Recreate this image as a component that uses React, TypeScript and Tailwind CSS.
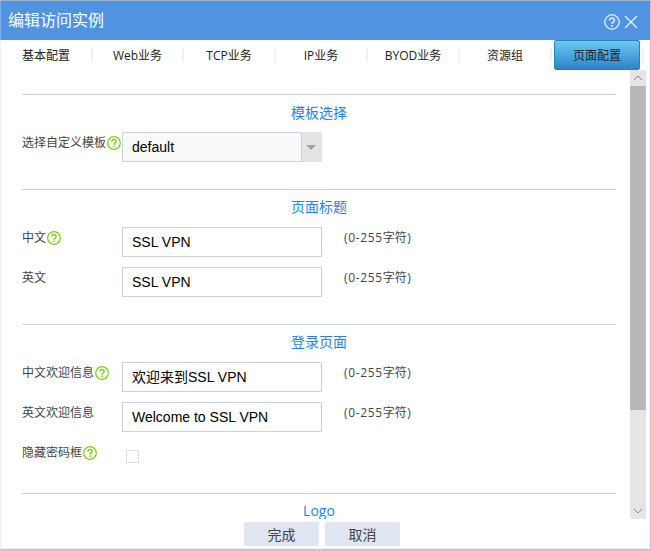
import type { ReactNode } from 'react';

const tabs = [
  { label: 'Web业务', width: 'w-[91px]' },
  { label: 'TCP业务', width: 'w-[92px]' },
  { label: 'IP业务', width: 'w-[92px]' },
  { label: 'BYOD业务', width: 'w-[92px]' },
  { label: '资源组', width: 'w-[92px]' },
];

function Help({ className, size = 14 }: { className: string; size?: number }) {
  return (
    <svg width={size} height={size} viewBox="0 0 14 14" fill="none" stroke="currentColor" className={`shrink-0 ${className}`}>
      <circle cx="7" cy="7" r="6.3" strokeWidth="1.3" />
      <path d="M4.9 5.6C4.9 4.2 5.8 3.6 7 3.6s2.1.7 2.1 1.8c0 1.5-2 1.6-2 3.3" strokeWidth="1.5" />
      <path d="M7.1 9.6v1.5" strokeWidth="1.5" />
    </svg>
  );
}

function Tab({ label, width, active }: { label: string; width: string; active?: boolean }) {
  return (
    <div className={`flex h-[30px] shrink-0 items-center gap-[2px] pl-[2px] ${width}`}>
      <div
        className={`flex h-[30px] flex-1 items-center justify-center whitespace-nowrap pt-px text-[12px] text-[#222] ${
          active ? 'rounded-[2px] border border-[#2286bd] bg-linear-to-b from-[#6ccaf5] to-[#2b84c6]' : ''
        }`}
      >
        {label}
      </div>
      <div className="h-[14px] w-[2px] bg-[#f1f1f1]" />
    </div>
  );
}

function Section({ title, height, first, children }: { title: string; height: string; first?: boolean; children?: ReactNode }) {
  return (
    <section className={`mr-[14px] shrink-0 border-t border-[#c6d1e6] ${height}`}>
      <h2 className={`h-[37px] text-center text-[14px] leading-[20px] text-[#2d7fdc] ${first ? 'pt-[8px]' : 'pt-[7px]'}`}>
        {title}
      </h2>
      {children}
    </section>
  );
}

function Row({ label, help, hint, children }: { label: string; help?: boolean; hint?: boolean; children: ReactNode }) {
  return (
    <div className="flex h-[40px] items-start">
      <div className="flex h-[22px] w-[100px] shrink-0 items-center whitespace-nowrap text-[12px] text-[#444]">
        <span>{label}</span>
        {help && <Help className="ml-[1px] text-[#7fce14]" />}
      </div>
      {children}
      {hint && (
        <span className="ml-[22px] text-[12px] leading-[22px] text-[#444]">
          <span className="tracking-[0.65px]">(0-255</span>字符<span className="ml-[0.5px]">)</span>
        </span>
      )}
    </div>
  );
}

function Field({ value, raised }: { value: string; raised?: boolean }) {
  return (
    <input
      defaultValue={value}
      className={`h-[30px] w-[200px] border border-[#c6d1e6] bg-white px-[9px] font-['Liberation_Sans','Noto_Sans_CJK_SC',sans-serif] text-[14px] text-black outline-none ${
        raised ? 'pb-[2px]' : ''
      }`}
    />
  );
}

export default function App() {
  return (
    <div className="flex h-[551px] w-[651px] flex-col overflow-hidden border-t border-b-2 border-t-[#a3b4cd] border-b-[#c3c6cb] bg-white font-['Open_Sans','Noto_Sans_CJK_SC',sans-serif]">
      <div className="flex min-h-0 flex-1 flex-col border-r border-[#c3cad5]">
        <header className="flex h-[39px] shrink-0 items-center border-l border-[#86aee2] bg-[#4f93e1] pr-[12px] pl-[7px] text-white">
          <h1 className="flex-1 pb-[2px] text-[16px] leading-[24px]">编辑访问实例</h1>
          <Help className="mt-[3px] text-[#d5e5f8]" size={16} />
          <svg width="14" height="14" viewBox="0 0 14 14" className="mt-[3px] ml-[4px]" stroke="#eef5fd" strokeWidth="1.2">
            <path d="M1 1l12 12M13 1L1 13" />
          </svg>
        </header>
        <div className="flex min-h-0 flex-1 flex-col border-r border-b border-l border-[#e9effb]">
          <nav className="flex h-[30px] shrink-0">
            <Tab label="基本配置" width="w-[92px]" />
            {tabs.map((t) => (
              <Tab key={t.label} {...t} />
            ))}
            <Tab label="页面配置" width="w-[92px]" active />
          </nav>
          <main className="flex h-[449px] shrink-0 pr-[3px]">
            <div className="flex flex-1 flex-col overflow-hidden pt-[24px] pl-[21px]">
              <Section title="模板选择" height="h-[95px]" first>
                <Row label="选择自定义模板" help>
                  <div className="flex h-[30px] w-[200px]">
                    <div className="flex-1 border border-[#c6d1e6] bg-[#f9f9f9] pl-[9px] font-['Liberation_Sans',sans-serif] text-[14px] leading-[28px] text-black">
                      default
                    </div>
                    <div className="flex w-5 items-center justify-center bg-[#e4e4e4] pr-[2px]">
                      <div className="border-x-[5px] border-t-[5px] border-x-transparent border-t-[#a0a0a0]" />
                    </div>
                  </div>
                </Row>
              </Section>
              <Section title="页面标题" height="h-[135px]">
                <Row label="中文" help hint>
                  <Field value="SSL VPN" />
                </Row>
                <Row label="英文" hint>
                  <Field value="SSL VPN" />
                </Row>
              </Section>
              <Section title="登录页面" height="h-[169px]">
                <Row label="中文欢迎信息" help hint>
                  <Field value="欢迎来到SSL VPN" raised />
                </Row>
                <Row label="英文欢迎信息" hint>
                  <Field value="Welcome to SSL VPN" />
                </Row>
                <Row label="隐藏密码框" help>
                  <div className="mt-[8px] ml-[4px] size-[13px] border border-[#dedede]" />
                </Row>
              </Section>
              <Section title="Logo" height="h-[80px]" />
            </div>
            <div className="flex w-[16px] shrink-0 flex-col bg-[#e5e5e5]">
              <div className="flex h-[16px] items-center justify-center">
                <svg width="10" height="6" viewBox="0 0 10 6" fill="none" stroke="#858585">
                  <path d="M1 5l4-4 4 4" />
                </svg>
              </div>
              <div className="h-[324px] bg-[#b8b8b8]" />
              <div className="mt-auto flex h-[17px] items-center justify-center">
                <svg width="10" height="6" viewBox="0 0 10 6" fill="none" stroke="#858585">
                  <path d="M1 1l4 4 4-4" />
                </svg>
              </div>
            </div>
          </main>
          <footer className="flex gap-[6px] pt-[3px] pl-[243px]">
            {['完成', '取消'].map((text) => (
              <button key={text} className="h-[24px] w-[75px] rounded-[2px] bg-[#dfe5f1] pt-[2px] text-[14px] leading-[22px] text-[#444]">
                {text}
              </button>
            ))}
          </footer>
        </div>
      </div>
    </div>
  );
}
